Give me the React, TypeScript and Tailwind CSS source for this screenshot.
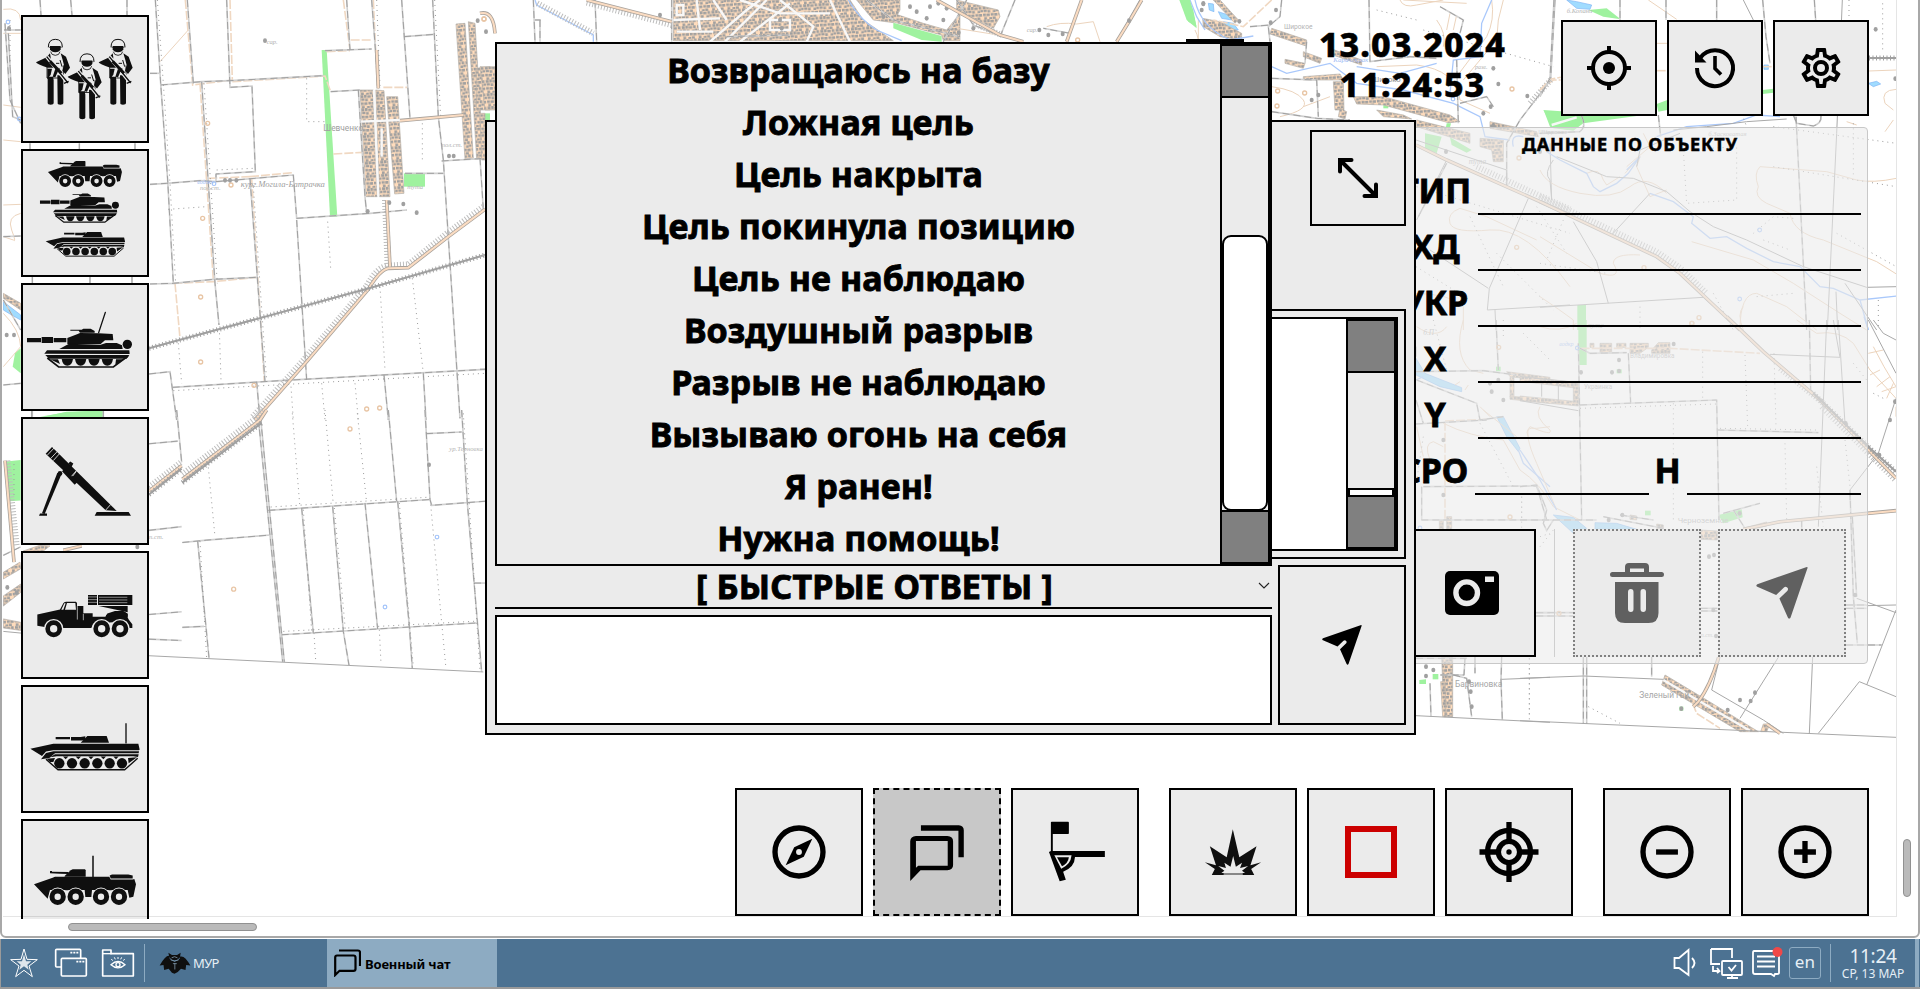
import React from "react";

const PANEL = "#ebebeb";
const INK = "#0f0f0f";

/* ---------- Map ---------- */

type Layer = {
  t: string;
  track?: string[];
  thin?: string[];
  dots?: string[];
  orange?: string[];
  contour?: string[];
  road?: string[];
  ticks?: string[];
  rail?: string[];
  water?: string[];
  lake?: string[];
  green?: string[];
  town?: string[];
  white?: string[];
  rings?: [number, number][];
  blueRings?: [number, number][];
  trees?: [number, number][];
  labels?: [number, number, string, number, boolean, string?][];
};

const layers: Layer[] = [
  {
    t: "scale(.33333)",
    track: [
      "M466 0L482 250L503 540L520 850", "M562 0L580 250", "M605 245L625 550L645 850L657 975",
      "M680 0L690 262L756 258L766 515L648 522V545", "M482 255L605 245L690 242L970 227", "M450 220H480",
      "M450 553L500 550L600 542L648 545L880 525L890 655L1110 640L1220 630", "M890 660L920 1140", "M450 852L520 850L640 838L770 832",
      "M518 1162L840 1142L1455 1108", "M447 1122L510 1115L530 1260", "M1040 0L1050 150", "M975 152L1115 147",
      "M1115 0L1135 265", "M1205 0L1230 355", "M1298 0L1315 350L1330 480L1380 1255", "M1212 110L1303 103",
      "M992 275L1080 270", "M1215 520L1330 520", "M750 535L795 1145", "M1325 483L1455 475", "M1440 475L1450 628",
      "M1152 1125L1165 1260", "M1270 1120L1278 1260", "M770 1145L780 1260", "M1075 270L1095 590L1100 640", "M120 0L123 45", "M212 0L216 45", "M381 0V45",
      "M90 430V447", "M238 430V447", "M405 430V447", "M97 831V850", "M270 831V850", "M396 831V850", "M97 1232V1250",
      "M12 90H62", "M15 70L30 300L62 370", "M25 100L38 350L62 360", "M10 710L62 708", "M10 1155L62 1150", "M10 900L62 990",
    ],
    orange: [
      "M556 0L578 255L697 240", "M600 250L640 840", "M690 0L697 240", "M750 530L880 518", "M625 535L750 530", "M525 850L540 1015", "M520 850L640 845L770 832",
      "M755 535L793 1145", "M697 245L975 228L992 275", "M1030 0L1050 150", "M980 155L1050 152", "M1052 120H1115", "M1150 262H1222", "M1000 462L1090 457", "M1120 0L1132 260",
    ],
    contour: ["M480 185L565 90", "M10 28Q60 20 62 60", "M10 420L62 425", "M10 615L62 613", "M62 640Q20 650 35 690T40 720L10 710", "M10 315L62 322", "M10 940Q60 990 62 1040L10 1100", "M10 100H62", "M1200 362L1390 345"],
    dots: [
      "M920 235V365H975", "M658 985L663 1140", "M983 665L992 805", "M1140 860L1155 1110", "M1237 835L1270 1120", "M505 628L620 620",
      "M535 1030L545 1150", "M873 1160L880 1260", "M965 1150L975 1260", "M1065 1150L1075 1260", "M472 0L490 250L510 550L527 850", "M612 250L652 850",
      "M760 560L800 1145", "M520 1172L1455 1120", "M30 60V200", "M1130 0L1140 260", "M1267 370V480", "M650 510L760 505", "M1304 0L1322 350",
    ],
    road: ["M765 1260L920 1085L1107 865Q1140 810 1165 805L1225 803L1345 710L1455 628", "M1160 600L1170 800", "M1200 362L1390 345", "M1130 150L1135 265"],
    ticks: ["M758 1250L912 1078L1100 858Q1130 800 1165 797L1225 793L1340 700L1455 616", "M1155 600L1163 800"],
    rail: ["M447 1045L1107 865L1455 765"],
    green: ["965,150 980,150 1012,650 990,650", "1212,520 1275,520 1275,560 1212,560", "62,1045 45,1060 38,1100 62,1120", "130,1250 200,1235 310,1232 312,1250", "1455,340 1470,340 1470,362 1455,362", "1105,430 1120,430 1120,445 1105,445"],
    lake: ["10,905 62,945 62,960 35,945 10,930"],
    town: ["1080,270 1120,270 1132,590 1098,590", "1127,270 1152,272 1170,590 1138,590", "1160,290 1193,290 1212,580 1184,582", "1368,72 1395,70 1420,475 1395,477", "1405,65 1425,70 1450,475 1430,478", "1428,205 1470,200 1470,330 1430,330", "10,880 62,910 62,930 10,895"],
    white: ["M1122 270L1135 590", "M1080 365L1200 360", "M1145 385V470"],
    rings: [[623, 370], [608, 655], [602, 891], [602, 1086], [762, 1156], [1100, 1227], [1139, 1224], [693, 555], [1452, 57]],
    blueRings: [[24, 66], [58, 357], [642, 551]],
    trees: [[795, 122], [1250, 638], [1210, 612], [1103, 634], [1347, 468], [1361, 468], [675, 541], [690, 541], [709, 541], [27, 85], [20, 1005], [42, 1005], [1433, 62], [1168, 608]],
    labels: [[970, 392, "Шевченко", 25, false, "#a0a0a0"], [722, 560, "кург.Могила-Батрачка", 26, true, "#a0a0a0"], [800, 132, "сар.", 20, true], [1325, 441, "пол.ст.", 20, true], [600, 569, "пол.ст.", 20, true], [1222, 567, "тута", 20, true], [592, 551, "водокч", 17, true, "#9dbcf5"]],
  },
  {
    t: "translate(0 410) scale(.33333 .33801)",
    track: [
      "M782 25L853 745", "M775 25L848 745", "M530 0L545 155", "M805 297L1290 265", "M1275 0L1290 265L1295 282L1455 270", "M905 290L940 660",
      "M998 285L1030 655L1047 755", "M1095 275L1133 648", "M1193 270L1228 640L1237 765", "M1385 0L1402 275L1445 775", "M1165 0L1190 270",
      "M845 665L1430 630", "M547 392L620 385L810 370", "M593 388L627 733", "M447 605L545 597", "M547 643L612 640", "M447 678L545 682",
      "M447 100L533 92", "M1278 70L1385 65", "M447 356L545 345", "M1422 512H1455", "M95 0V22", "M310 0V22", "M10 430L62 405",
    ],
    thin: ["M447 727L1450 775", "M10 655L63 660"],
    dots: ["M877 10L900 290", "M975 0L1000 280", "M1072 10L1100 275", "M625 170L645 375", "M1292 280L1337 755", "M942 660L947 740", "M1138 650L1143 750", "M600 388L620 733", "M910 295L935 655", "M1003 290L1036 650", "M1198 275L1240 760", "M1390 10L1440 770", "M812 287L1285 258", "M850 655L1425 625", "M42 160V260"],
    road: ["M447 240L545 165", "M547 205L780 30L800 0", "M15 150L42 450", "M190 415L245 402"],
    ticks: ["M447 228L545 153", "M547 190L770 22L790 0", "M22 150L50 400"],
    rail: ["M547 215L785 38", "M447 250L545 174"],
    green: ["18,152 62,148 62,268 28,270", "120,20 190,8 310,0 312,22"],
    town: ["10,480 60,450 62,470 10,500", "10,550 62,515 62,540 10,580", "10,618 62,628 62,652 10,645", "70,417 120,400 150,402 130,417"],
    rings: [[1050, 56], [701, 530]],
    blueRings: [[1311, 376], [1155, 583]],
    trees: [[22, 525], [50, 540], [412, 405], [1287, 162]],
    labels: [[1348, 120, "ур.Терновка", 20, true], [447, 382, "п.ст.", 20, true]],
  },
  {
    t: "translate(480 0) scale(.33333)",
    town: [
      "580,0 1110,0 1150,60 1240,122 580,122", "1130,0 1260,0 1260,30 1240,68 1180,60", "1240,40 1330,70 1400,90 1440,40 1440,122 1390,122 1385,105 1240,66", "0,200 45,200 45,330 15,330", "0,340 15,340 15,480 5,480",
    ],
    white: ["M735 125L860 0", "M780 125L930 10", "M580 60L720 55", "M700 0L740 60", "M690 125L800 30L840 0", "M1050 0L1110 125", "M900 0L1000 80L980 125", "M650 0L660 90", "M590 95H700", "M780 0L900 40L1050 40", "M590 15H610V45H590Z", "M870 60H930V90H870Z"],
    water: ["M165 0L170 15L340 105V125", "M1105 0Q1140 60 1190 90L1265 122"],
    green: ["945,75 985,35 990,50 960,88", "1240,68 1385,108 1385,125 1325,120 1240,85"],
    track: ["M345 0L350 125", "M160 0L165 125", "M180 60V125", "M575 0V125", "M165 60H182", "M1160 0L1240 60L1440 110", "M740 110L930 105", "M0 768L15 764", "M0 1108H15"],
    road: ["M320 0L575 65", "M0 40Q40 30 45 100"],
    ticks: ["M320 8L575 75", "M172 10L340 100"],
    trees: [[540, 45], [900, 60], [905, 85], [1350, 20], [1290, 20], [1310, 35], [1375, 10], [1400, 25], [1340, 55], [1390, 60], [1210, 50], [18, 95]],
    rings: [[12, 57]],
    labels: [],
  },
  {
    t: "translate(690 0) scale(.33333)",
    town: ["800,0 925,30 930,50 910,85 880,70 800,30"],
    road: ["M740 0L930 105L1000 125", "M1175 0L1130 125", "M1355 0L1320 60L1280 125"],
    contour: ["M1070 80Q1110 65 1160 72L1210 65L1230 125", "M800 85L925 105", "M1525 60V125"],
    track: ["M975 0L930 110", "M830 0L760 125", "M800 0L850 75L925 105", "M1350 0L1280 125", "M1130 125L1140 100L1060 85"],
    ticks: ["M850 70L935 105"],
    green: ["1468,0 1498,0 1510,30 1520,85 1490,60"],
    water: ["M1500 0L1520 50L1545 90"],
    trees: [[850, 85], [806, 98], [1048, 90], [1075, 105], [1118, 102], [1317, 62], [1540, 10]],
    rings: [[1163, 120]],
    labels: [[1010, 95, "сар.", 20, true]],
  },
  {
    t: "translate(1170 0) scale(.33333)",
    lake: ["115,10 130,12 132,35 118,30", "145,35 175,45 185,60 155,55", "160,65 190,70 205,90 175,88"],
    town: [
      "98,55 150,65 215,100 215,120 150,110 100,80", "130,0 150,0 205,60 195,70", "305,85 410,120 408,138 300,102", "400,155 455,175 450,190 400,170", "480,145 575,180 575,195 480,162",
      "345,178 405,190 400,205 345,190", "400,230 510,222 520,240 400,240", "490,245 520,245 522,330 495,330", "510,325 530,335 525,357 505,350",
      "550,290 640,290 840,345 870,365 835,368 640,315 560,312", "740,360 900,400 900,430 740,380", "930,415 1000,420 1000,485 970,485 965,450 930,440", "620,330 700,345 725,357 640,350", "960,365 1100,395 1105,410 960,385",
    ],
    water: ["M75 0Q90 80 180 120L250 108", "M305 200L350 220L480 190L560 250L700 270L850 310L930 350L945 410L1020 420", "M965 0L935 70L930 170L850 180L840 280", "M800 190L690 220L560 200", "M1030 440Q1020 400 1060 410"],
    track: ["M597 0L600 185L720 170L800 175", "M1155 0L1142 240L1050 360L1010 430V560", "M305 235L440 240L445 350", "M305 335L440 355L540 360", "M335 0L330 50L295 80L300 125", "M410 125L405 190", "M240 80L300 75", "M860 180L865 370", "M870 310L950 290L970 320", "M810 20L880 60L870 100", "M830 490L745 650"],
    thin: ["M830 480L740 660", "M1075 595L958 865L952 930L1200 915", "M780 750L955 865", "M975 930L978 990", "M738 420L1010 510V560", "M1140 430L1145 600"],
    orange: ["M305 0L220 80L130 60", "M1110 270L1150 240H1172"],
    contour: ["M690 0Q700 25 740 15L820 0", "M965 0Q975 60 950 110L860 230", "M1000 0L985 60L980 120L880 240", "M305 260Q380 270 400 300T330 350", "M800 60Q830 100 820 140", "M840 40L830 90", "M700 0L890 10", "M860 45L850 90", "M400 320L480 290", "M620 200L740 195Q860 210 870 300L960 340", "M870 625Q830 640 840 670T960 690T1200 860", "M870 625L950 650L1100 720", "M730 880Q840 880 880 920V990", "M75 90Q90 120 80 130"],
    dots: ["M740 560L1200 700", "M900 650L1000 860", "M738 800L900 900", "M980 760L1150 930", "M760 90L1150 200", "M620 30L740 60", "M1100 620L1190 760"],
    road: ["M738 435L830 480L1200 645"],
    ticks: ["M920 500L1200 628", "M1142 240L1080 310"],
    green: ["765,400 815,410 800,460 765,445", "840,412 905,450 890,458 845,435", "1120,330 1195,335 1195,390 1150,385", "30,0 60,0 80,80 55,65", "640,313 655,313 655,325 640,325", "830,370 843,370 840,382 828,382"],
    rings: [[323, 273], [404, 279], [321, 318], [1047, 474], [1040, 742], [1026, 267]],
    blueRings: [[849, 297]],
    trees: [[95, 30], [100, 12], [302, 68], [318, 30], [208, 64], [985, 252], [962, 320], [1072, 288], [970, 205], [425, 300], [828, 455], [445, 285], [970, 378], [940, 340]],
    labels: [[342, 88, "Широкое", 20, false], [606, 247, "Широко", 23, false, "#8f8f8f"], [490, 185, "Карачекрак", 21, true, "#9dbcf5"], [896, 492, "тута", 22, true, "#b0b0b0"], [915, 206, "разв.", 18, true], [1105, 403, "Широкое", 18, false]],
  },
  {
    t: "translate(1540 0) scale(.33333)",
    track: ["M42 0L30 235L0 290", "M240 0V60", "M378 0V60", "M530 0V60", "M668 0L678 110L690 190", "M823 0L827 60", "M768 350L800 990", "M760 345L770 370L820 378Q845 370 843 348", "M125 348Q140 380 120 395L0 400", "M355 345L362 410"],
    thin: ["M610 0L640 60", "M907 0L890 400L862 990", "M50 470L200 530L280 535L380 575L450 635L520 680L620 720L790 800L980 862L1069 860", "M205 910L170 785L100 665", "M330 580L215 705", "M0 922L490 892L600 990", "M888 875L893 990", "M915 850L1010 990", "M400 390L500 380L620 365L740 357", "M40 480Q10 520 30 540L35 600", "M420 400L300 450L290 500"],
    orange: ["M350 212H382", "M0 270L30 238L62 232", "M668 200H700"],
    contour: ["M1069 535Q1000 550 950 540L860 515L660 500Q640 520 655 560Q640 590 680 610L750 640Q760 700 850 720L1010 785L1069 822", "M325 0L410 58", "M987 213L1069 210", "M1069 268Q1020 270 1035 310L1060 330", "M0 510Q20 560 120 580T270 560T380 580", "M0 710L180 820Q250 840 220 790Q220 760 300 765", "M1060 360L1035 395", "M920 365L950 375", "M455 725L640 780L760 850L900 940L980 990", "M600 990Q600 880 650 880L740 920L830 990", "M610 990Q590 940 610 920", "M140 520Q180 500 190 540L200 555L240 530", "M255 520L300 470L290 500L330 590L380 570", "M350 130H382", "M0 890Q60 930 100 960V990", "M310 400L330 440L260 500"],
    dots: ["M927 0V150", "M1028 10V160", "M430 450L440 610L590 600V440Z", "M700 380L1069 430", "M940 370V530", "M640 700L700 650L760 655", "M700 500L1069 560", "M670 720L750 750", "M1015 900V990", "M890 700L1069 800", "M590 300L620 380", "M0 790L200 820", "M300 920V990", "M520 880L580 990", "M70 660L20 780", "M650 890L760 880"],
    road: ["M0 605L350 770L420 820L600 990"],
    ticks: ["M0 590L350 755L420 803L500 880"],
    rail: ["M987 174H1069"],
    green: ["12,333 160,345 290,348 130,370 100,392 30,380", "145,30 200,25 242,58 190,50", "350,312 382,300 382,330 355,335", "668,270 700,266 700,278 668,282", "112,915 138,915 138,990 112,990"],
    lake: ["80,0 110,5 155,15 150,28 110,25", "672,195 685,195 685,208 672,208", "985,250 1010,244 1022,252 1000,260"],
    water: ["M20 455L60 480L140 520L160 560L180 575L230 550L265 520L300 470L260 510", "M330 580L400 605L460 650L455 670L510 715L560 710L620 745L700 785L780 800L840 860L880 865L960 900L1069 888", "M350 410L440 380L580 370L650 345L720 350", "M960 900L985 990"],
    white: ["M35 375L110 352"],
    rings: [[312, 803], [456, 970], [477, 953]],
    blueRings: [[659, 690], [599, 897]],
    trees: [[1007, 88], [1066, 236], [0, 455]],
    labels: [[80, 38, "б.Копани", 20, true], [505, 408, "б.Засковатая", 20, true], [5, 402, "Широкое", 18, false], [140, 985, "тута", 20, true, "#b0b0b0"]],
  },
  {
    t: "translate(1170 320) scale(.33333)",
    lake: ["738,115 765,160 875,203 875,215 810,200 738,165", "980,290 1000,290 1050,385 1045,395 1010,350"],
    water: ["M1045 390L1060 430L1140 500", "M738 180L760 170"],
    town: ["1010,155 1140,172 1140,185 1020,170", "1020,228 1140,240 1140,250 1020,238", "1020,172 1032,172 1032,230 1020,230", "815,1012 848,1012 848,1190 822,1190", "812,1085 825,1085 828,1190 818,1190", "808,600 820,600 820,628 808,628", "830,590 845,590 845,628 830,628"],
    track: ["M738 155L940 152L1040 165", "M740 180L920 250L930 300L1000 290", "M738 312L950 300", "M755 500V600H1120", "M760 500L1100 498L1130 600", "M978 0L985 150", "M738 1015H890", "M885 1015L882 1065H810", "M915 1010V1060", "M995 1010L993 1080L997 1200", "M850 1065L890 1075L905 1190", "M780 1090L783 1190", "M738 240L760 310", "M1098 878H1140", "M1098 888H1140"],
    thin: ["M738 1187L1140 1207", "M738 80V110", "M995 1078L1140 1072"],
    orange: ["M825 305V600", "M825 303L950 298"],
    contour: ["M880 0Q850 100 900 150L940 160", "M940 270L1040 350", "M820 310Q900 350 1000 360L1050 450", "M1075 350Q1060 320 1100 325L1140 320", "M780 420Q760 370 790 365L820 380", "M930 260L960 290", "M740 320L760 410", "M855 195L870 185M885 210L895 195", "M740 20Q800 60 830 20"],
    dots: ["M790 0L830 150", "M1055 530V628", "M1078 1015V1190", "M1000 0V60", "M930 310L1030 500", "M1110 650L1140 640", "M1060 40L1140 120", "M760 350L740 480"],
    green: ["788,1062 805,1062 805,1078 788,1078", "748,1080 768,1078 768,1092 748,1092", "978,140 992,140 992,154 978,154"],
    rings: [[986, 82], [1020, 591]],
    blueRings: [[750, 624]],
    trees: [[960, 190], [1000, 240], [985, 180], [768, 1040], [768, 1068], [790, 1050], [897, 1085], [905, 1160], [820, 360], [820, 525], [902, 1115], [965, 215]],
    labels: [[855, 1100, "Барвиновка", 25, false, "#a6a6a6"], [760, 45, "б.П", 22, true, "#b0b0b0"]],
  },
  {
    t: "translate(1520 320) scale(.33333)",
    green: ["175,0 200,0 200,135 175,135", "595,585 665,568 668,592 610,610", "375,572 392,572 392,586 375,586", "290,148 305,148 305,160 290,160", "478,1160 490,1160 490,1172 478,1172"],
    lake: ["100,585 160,592 200,625 160,640", "225,608 290,610 350,628 225,628"],
    town: [
      "0,168 175,188 175,205 0,184", "0,228 175,245 175,258 0,242", "160,188 178,190 178,250 160,248", "210,70 222,70 222,82 210,82", "240,70 275,70 275,100 240,100", "290,70 318,70 318,82 290,82",
      "330,70 385,70 385,82 360,100 330,100", "395,90 415,68 450,68 450,100 395,100", "543,630 592,633 592,660 543,658", "435,1065 560,1140 715,1235 660,1235 425,1095", "730,1212 750,1212 740,1235 722,1235", "330,585 350,588 350,600 330,598", "410,612 430,615 430,625 410,625", "680,622 740,606 740,618 690,628",
    ],
    white: ["M430 1080L690 1232"],
    water: ["M0 390L60 480L110 570", "M1032 -10L1045 30"],
    track: ["M180 255L590 240L597 600", "M175 70L185 600", "M325 100L332 248", "M180 85L210 100L320 98", "M868 0L872 210L975 315", "M592 330L895 338", "M0 600L230 600", "M250 590L430 625", "M300 585L400 600", "M610 580L720 550", "M640 570L675 625", "M845 600V628", "M190 1010V1212", "M200 1010V1212", "M395 1010V1070", "M49 878H160", "M49 888H160", "M542 865H592", "M542 873H592", "M978 855H1040", "M978 865H1040", "M990 510L1000 830L1012 970", "M997 590L1010 830", "M978 975H1085", "M0 500L50 495L80 570L70 610L80 632L100 600"],
    thin: ["M0 1202L1128 1252", "M920 0L895 620", "M955 0L975 310L1050 380", "M750 103L960 112L940 0", "M878 1010L868 1240", "M895 1240L1018 1085L1128 1130", "M1128 870L1040 1095", "M1040 857L1128 855", "M1010 835L1128 878", "M0 1075L190 1068L430 1078", "M775 1012L660 1195", "M600 1010L575 1110L730 1200L790 1240", "M1128 235L1075 400L990 510V540", "M1045 0L1128 160", "M1060 0L1090 40L1128 60", "M0 170L175 188", "M0 242L175 272", "M65 190V230M115 195V240"],
    orange: ["M182 85L450 85L720 100", "M518 1150L530 1180L600 1225"],
    contour: ["M60 260Q40 290 90 330Q100 350 30 320Q10 340 50 430L110 570", "M830 0L890 40Q960 30 1000 70L1050 150L1128 235", "M1045 100L1090 90M1050 165L1080 150M1070 200L1110 170M1085 215L1128 200M1100 235L1120 190", "M0 450Q60 490 100 560L180 600", "M1060 80Q1090 140 1128 200", "M60 20Q120 40 170 10", "M1128 260V290"],
    road: ["M620 -10L730 95L900 240L1128 475", "M670 628L780 605L1128 572", "M596 1012Q570 1100 535 1145L520 1160", "M740 1212L780 1240"],
    ticks: ["M780 145L910 250", "M905 260L1128 482"],
    rail: ["M880 220L1050 385L1128 455"],
    dots: ["M548 95V240", "M675 105L683 320", "M762 100L768 320", "M795 370L800 600", "M460 250V600", "M890 440L910 620", "M975 360L990 500", "M180 265L590 252", "M600 325L890 330", "M1000 130L1040 180", "M28 1015V1200", "M205 1160L300 1210", "M700 860L760 900", "M60 680L100 630", "M1060 220L1100 240", "M5 530V600"],
    blueRings: [[172, 84]],
    rings: [[117, 880], [515, 10]],
    trees: [[183, 157], [276, 157], [297, 120], [297, 153], [461, 72], [266, 600], [307, 585], [659, 580], [582, 705], [567, 710], [660, 1140], [1078, 405], [1125, 245], [623, 1170], [484, 1166], [1110, 300], [977, 310], [580, 870], [588, 948], [705, 1118], [692, 1143], [1005, 825]],
    labels: [[330, 115, "Владимировка", 19, false], [192, 206, "Украинка", 19, false], [473, 608, "Черноземное", 24, false], [358, 1133, "Зеленый Гай", 25, false, "#a6a6a6"], [118, 78, "водкр", 18, true, "#9dbcf5"], [204, 22, "тута", 20, true, "#b0b0b0"], [542, 950, "п.ст.", 18, true]],
  },
];

function P({ d, c, w, dash }: { d: string[] | undefined; c: string; w: number; dash?: string }) {
  return (
    <>
      {(d || []).map((p, i) => (
        <path key={i} d={p} fill="none" stroke={c} strokeWidth={w} strokeDasharray={dash} vectorEffect="non-scaling-stroke" />
      ))}
    </>
  );
}

function MapCanvas() {
  return (
    <svg className="absolute left-[3px] top-0" width="1893" height="916" viewBox="3 0 1893 916">
      <defs>
        <pattern id="houses" width="46" height="40" patternUnits="userSpaceOnUse" patternTransform="rotate(-4)">
          <rect width="46" height="40" fill="#ffdcbc" />
          <path
            d="M0 1H9V9H0ZM11 0H19V9H11ZM21 2H31V10H21ZM34 1H42V9H34ZM2 11H12V18H2ZM14 12H22V20H14ZM30 13H38V20H30ZM39 11H46V18H39ZM0 22H8V30H0ZM10 23H20V31H10ZM23 22H31V30H23ZM33 23H43V31H33ZM3 33H11V40H3ZM18 34H26V40H18ZM28 33H37V40H28Z"
            fill="#a0a0a0"
          />
        </pattern>
      </defs>
      {layers.map((l, i) => (
        <g key={i} transform={l.t}>
          {(l.green || []).map((p, k) => <polygon key={k} points={p} fill="#9ff29f" />)}
          {(l.lake || []).map((p, k) => <polygon key={k} points={p} fill="#a0dcff" stroke="#7fb4f5" strokeWidth="2" />)}
          {(l.town || []).map((p, k) => <polygon key={k} points={p} fill="url(#houses)" stroke="#b8b0a8" strokeWidth="2" />)}
          <P d={l.white} c="#f8f8f8" w={2.4} />
          <P d={l.contour} c="#ecd4bd" w={1} />
          <P d={l.orange} c="#f0d8c2" w={1.6} dash="9 2" />
          <P d={l.water} c="#a9c8fb" w={1.3} />
          <P d={l.track} c="#d0d0d0" w={1.6} />
          <P d={l.track} c="#a0a0a0" w={1} dash="7 4" />
          <P d={l.thin} c="#a8a8a8" w={1} />
          <P d={l.dots} c="#9a9a9a" w={1} dash="1 4" />
          <P d={l.ticks} c="#bdbdbd" w={6} dash="1 2" />
          <P d={l.road} c="#a8a29c" w={3.6} />
          <P d={l.road} c="#fbdcc2" w={2} />
          <P d={l.rail} c="#a0a0a0" w={2} />
          <P d={l.rail} c="#a0a0a0" w={5} dash="1 2.500" />
          {(l.rings || []).map(([x, y], k) => <circle key={k} cx={x} cy={y} r="6" fill="none" stroke="#e8c5a5" strokeWidth="4" />)}
          {(l.blueRings || []).map(([x, y], k) => <circle key={k} cx={x} cy={y} r="5.5" fill="none" stroke="#a3c4fa" strokeWidth="3.5" />)}
          {(l.trees || []).map(([x, y], k) => <ellipse key={k} cx={x} cy={y} rx="6" ry="7" fill="#a0a0a0" />)}
          {(l.labels || []).map(([x, y, s, size, it, c], k) => (
            <text key={k} x={x} y={y} fontSize={size} fill={c || "#b4b4b4"} className={it ? "font-['Liberation_Serif'] italic" : "font-['Roboto']"}>
              {s}
            </text>
          ))}
        </g>
      ))}
    </svg>
  );
}

/* ---------- Vehicle drawings ---------- */

function Soldier() {
  return (
    <g fill={INK}>
      <path d="M145 142Q145 118 166 118T187 142" fill="none" stroke={INK} strokeWidth="3" />
      <path d="M147 142H185" stroke={INK} strokeWidth="2" />
      <path d="M150 138H182V148Q178 157 166 157T150 148Z" />
      <path d="M152 155Q154 166 166 166T180 155" fill="none" stroke={INK} strokeWidth="2.5" />
      <path d="M150 160L140 172L108 187Q110 193 143 203L160 203L176 214L180 206L150 190L152 172Z" />
      <path d="M182 160L198 170L210 203L196 222L187 212L192 196L188 180Z" />
      <path d="M141 172V234H190V196" fill="none" stroke={INK} strokeWidth="2.5" />
      <path d="M142 206H156L152 224L142 238Z" />
      <path d="M143 230H160V236L161 240V310Q161 314 152 314T143 310Z" />
      <path d="M172 226H190V310Q190 314 181 314T173 310Z" />
      <path d="M140 170L204 249" stroke={PANEL} strokeWidth="11" />
      <path d="M140 170L204 249M192 250L206 244" stroke={INK} strokeWidth="4" />
      <path d="M150 184L184 220" stroke={INK} strokeWidth="9" />
      <path d="M166 206L158 230L166 232L174 214Z" />
      <path d="M180 180L186 200M168 190H178" stroke={INK} strokeWidth="3" />
    </g>
  );
}

function Tank() {
  return (
    <g fill={INK}>
      <path d="M81 1014H123V1027H81ZM125 1011H159V1029H125ZM161 1014H199V1027H161Z" />
      <path d="M202 1014L233 1002L240 999L296 1000L338 1002L340 1021H315L302 1032H202Z" />
      <path d="M211 989H245L250 986H272L284 993V998H240L236 992H211Z" />
      <path d="M178 1047L207 1031L302 1034L318 1029H350L366 1036L368 1047Z" />
      <circle cx="382" cy="1033" r="14" />
      <path d="M133 1061L141 1051H388L389 1062Z" />
      <path d="M136 1065H388L380 1076H147Z" />
      <path d="M142 1074L176 1101H340L384 1068" fill="none" stroke={INK} strokeWidth="5" />
      {[202, 242, 282, 322].map((x) => <path key={x} d={`M${x - 17} 1077H${x + 17}Q${x + 14} 1097 ${x} 1097T${x - 17} 1077Z`} />)}
      <path d="M150 1078H174L180 1092ZM348 1078H374L346 1094Z" />
    </g>
  );
}

function Bmp() {
  return (
    <g fill={INK}>
      <path d="M167 968H210V975H167ZM213 968H242L256 966V978H213Z" />
      <path d="M242 985L262 965H320L327 985Z" />
      <path d="M91 1003L160 988H415L419 1005L417 1007H160L138 1011L126 1024Z" />
      <path d="M123 1034L138 1015L160 1010H417L416 1016H165L148 1030Z" />
      <path d="M150 1028L165 1019H416L414 1027L400 1025H170Z" />
      <path d="M138 1034L174 1065H374L413 1031" fill="none" stroke={INK} strokeWidth="4" />
      {[178, 216, 254, 292, 329, 366].map((x) => <circle key={x} cx={x} cy="1046" r="15.5" />)}
      <path d="M140 1032L165 1030L160 1042L150 1042ZM384 1030L411 1028L386 1046Z" />
      {[197, 235, 273, 310, 348].map((x) => <path key={x} d={`M${x - 8} 1026H${x + 8}L${x} 1034Z`} />)}
    </g>
  );
}

function Btr() {
  return (
    <g fill={INK}>
      <path d="M150 1364H156V1366L205 1367V1373L180 1372L150 1371Z" />
      <path d="M194 1379L212 1362L218 1359H255L257 1362V1381H194Z" />
      <path d="M102 1403L158 1384L165 1381H328L332 1389H398L403 1388L408 1403L400 1440L388 1443L383 1420H276L274 1441H256L254 1420H150L143 1446Z" />
      <path d="M329 1377L336 1374H385L398 1377V1386H332Z" />
      {[173, 227, 303, 357].map((x) => (
        <g key={x}>
          <circle cx={x} cy="1440" r="27" fill={PANEL} />
          <circle cx={x} cy="1440" r="17" fill="none" stroke={INK} strokeWidth="15" />
        </g>
      ))}
      <path d="M192 1411H208L205 1421H196ZM322 1411H338L335 1421H326Z" />
    </g>
  );
}

function Tile({ box, children }: { box: string; children: React.ReactNode }) {
  return (
    <button className="size-32 shrink-0 border-2 border-black bg-[#ebebeb]">
      <svg className="block size-[124px]" viewBox={box} preserveAspectRatio="none">{children}</svg>
    </button>
  );
}

function UnitBar() {
  return (
    <aside className="flex h-[919px] w-[149px] shrink-0 flex-col gap-1.5 overflow-hidden pl-[21px] pt-[15px]">
      <Tile box="69 51 372 372">
        <Soldier />
        <g transform="translate(188 0)"><Soldier /></g>
        <g transform="translate(95 43.5)"><Soldier /></g>
      </Tile>
      <Tile box="69 453 372 372">
        <g transform="translate(70 -522.5) scale(.725 .74)"><Btr /></g>
        <g transform="translate(59 -157) scale(.752 .748)"><Tank /></g>
        <g transform="translate(71 -.5) scale(.726 .722)"><Bmp /></g>
      </Tile>
      <Tile box="69 855 372 372">
        <Tank />
        <path d="M296 998L316 937" stroke={INK} strokeWidth="4" strokeLinecap="round" />
      </Tile>
      <Tile box="69 27 372 367">
        <g fill={INK}>
          <path d="M156 110L137 130L317 297L350 299Z" />
          <path d="M163 112L142 134M173 122L152 144M180 128L160 150M236 172L206 206M229 182L218 196M332 280L314 300" stroke={PANEL} strokeWidth="2.5" />
          <path d="M190 178L228 218" stroke={INK} strokeWidth="11" />
          <path d="M172 186L184 191L134 308L126 306Z" />
          <circle cx="180" cy="188" r="7" />
          <path d="M205 158L211 153L220 159L214 170Z" />
          <path d="M120 307H141V313H117ZM290 302H386L393 313H284Z" />
        </g>
      </Tile>
      <Tile box="69 423 372 367">
        <g fill={INK}>
          <path d="M112 605L180 590L190 572Q192 567 198 567H228L231 571V580H250V601H278V612H316L322 602L345 595H370L383 602V614L386 620L397 634V645H388L378 624L340 628L280 632L274 645H190L160 622L134 642L112 638Z" />
          <path d="M184 591L193 572H197L190 591ZM195 591L201 571H226L228 591Z" fill={PANEL} />
          <path d="M232 580V620M250 603V622" stroke={PANEL} strokeWidth="2" />
          <path d="M264 547H291V577H264ZM294 547H397V577H294ZM296 580H383V598L345 590Z" />
          <path d="M264 553H291M264 561H291M264 569H291M297 554H382M297 562H382M297 570H382" stroke="#c4c4c4" strokeWidth="2" />
          <path d="M318 607L345 597H372L383 604V612H318Z" />
          {[161, 305, 360].map((x) => (
            <g key={x}>
              <circle cx={x} cy="647" r="29" fill={PANEL} />
              <circle cx={x} cy="647" r="18" fill="none" stroke={INK} strokeWidth="14" />
            </g>
          ))}
        </g>
      </Tile>
      <Tile box="69 820 372 367">
        <Bmp />
        <path d="M378 927V987" stroke="#3c3c3c" strokeWidth="5" />
      </Tile>
      <Tile box="69 1216 372 367">
        <Btr />
        <path d="M279 1319V1382" stroke={INK} strokeWidth="4.5" />
      </Tile>
    </aside>
  );
}

/* ---------- Toolbars ---------- */

function TopButton({ children }: { children: React.ReactNode }) {
  return (
    <button className="flex size-24 items-center justify-center border-2 border-black bg-[#ebebeb]">
      <svg width="48" height="48" viewBox="0 0 48 48">{children}</svg>
    </button>
  );
}

const COG =
  "M12,8A4,4 0 0,1 16,12A4,4 0 0,1 12,16A4,4 0 0,1 8,12A4,4 0 0,1 12,8M12,10A2,2 0 0,0 10,12A2,2 0 0,0 12,14A2,2 0 0,0 14,12A2,2 0 0,0 12,10M10,22C9.75,22 9.54,21.82 9.5,21.58L9.13,18.93C8.5,18.68 7.96,18.34 7.44,17.94L4.95,18.95C4.73,19.03 4.46,18.95 4.34,18.73L2.34,15.27C2.21,15.05 2.27,14.78 2.46,14.63L4.57,12.97L4.5,12L4.57,11L2.46,9.37C2.27,9.22 2.21,8.95 2.34,8.73L4.34,5.27C4.46,5.05 4.73,4.96 4.95,5.05L7.44,6.05C7.96,5.66 8.5,5.32 9.13,5.07L9.5,2.42C9.54,2.18 9.75,2 10,2H14C14.25,2 14.46,2.18 14.5,2.42L14.87,5.07C15.5,5.32 16.04,5.66 16.56,6.05L19.05,5.05C19.27,4.96 19.54,5.05 19.66,5.27L21.66,8.73C21.79,8.95 21.73,9.22 21.54,9.37L19.43,11L19.5,12L19.43,13L21.54,14.63C21.73,14.78 21.79,15.05 21.66,15.27L19.66,18.73C19.54,18.95 19.27,19.04 19.05,18.95L16.56,17.95C16.04,18.34 15.5,18.68 14.87,18.93L14.5,21.58C14.46,21.82 14.25,22 14,22H10M11.25,4L10.88,6.61C9.68,6.86 8.62,7.5 7.85,8.39L5.44,7.35L4.69,8.65L6.8,10.2C6.4,11.37 6.4,12.64 6.8,13.8L4.68,15.36L5.43,16.66L7.86,15.62C8.63,16.5 9.68,17.14 10.87,17.38L11.24,20H12.76L13.13,17.39C14.32,17.14 15.37,16.5 16.14,15.62L18.57,16.66L19.32,15.36L17.2,13.81C17.6,12.64 17.6,11.37 17.2,10.2L19.31,8.65L18.56,7.35L16.15,8.39C15.38,7.5 14.32,6.86 13.12,6.62L12.75,4H11.25Z";

function TopBar() {
  return (
    <div className="flex items-start pt-5">
      <div className="mr-[55px] pt-1 text-center text-[34px] leading-10 font-extrabold tracking-[1.05px] [-webkit-text-stroke:0.5px_#000]">
        <div className="whitespace-nowrap">13.03.2024</div>
        <div className="whitespace-nowrap">11:24:53</div>
      </div>
      <div className="flex gap-2.5">
        <TopButton>
          <circle cx="24" cy="24" r="6" />
          <circle cx="24" cy="24" r="16" fill="none" stroke="#000" strokeWidth="4" />
          <path d="M24 2V8M24 40V46M2 24H8M40 24H46" stroke="#000" strokeWidth="4" />
        </TopButton>
        <TopButton>
          <path d="M6 24A18 18 0 1 0 9.5 13.5" fill="none" stroke="#000" strokeWidth="4" />
          <path d="M4 6.5V18.5H15.5Z" />
          <path d="M24 12V24.5L30 30.5" fill="none" stroke="#000" strokeWidth="3.6" />
        </TopButton>
        <TopButton>
          <path d={COG} transform="scale(2)" />
        </TopButton>
      </div>
    </div>
  );
}

const PLANE = "M39.5 1.2Q40.2-.3 38.5.2L1 13.3Q-.5 14.5 1 15.2L15.5 21.6L21.5 15.7Q22.8 14.6 24 15.7T24.2 18.3L18 24.3L24.5 38.8Q25.6 40.6 26.6 38.8Z";

function BigButton({ children, dashed }: { children: React.ReactNode; dashed?: boolean }) {
  return (
    <button className={dashed ? "flex size-32 items-center justify-center border-2 border-dashed border-black bg-[#c8c8c8]" : "flex size-32 items-center justify-center border-2 border-black bg-[#ebebeb]"}>
      {children}
    </button>
  );
}

function BottomBar() {
  return (
    <div className="mt-[124px] flex gap-[30px]">
      <div className="flex gap-2.5">
        <BigButton>
          <svg width="64" height="64" viewBox="0 0 24 24">
            <circle cx="12" cy="12" r="9" fill="none" stroke="#000" strokeWidth="2" />
            <path d="M7 17L10.2 10.2L17 7L13.8 13.8Z" />
            <circle cx="12" cy="12" r="1.1" fill={PANEL} />
          </svg>
        </BigButton>
        <BigButton dashed>
          <svg width="124" height="124" viewBox="405 60 324 372" preserveAspectRatio="none">
            <path d="M525 166H624Q637 167 637 181V262H623V182H525Z" />
            <path fillRule="evenodd" d="M512 198H594Q609 199 609 214V286Q609 300 594 301H524L497 333V214Q498 199 512 198ZM512 213V293L518 287H595V213Z" />
          </svg>
        </BigButton>
        <BigButton>
          <svg width="124" height="124" viewBox="766 60 324 372" preserveAspectRatio="none">
            <path d="M865 157Q865 155 867 155H910Q912 155 912 158V190Q912 192 910 192H870V243H1006V261H928Q927 292 897 305L904 329L888 334L860 246L865 243Z" />
            <path d="M874 256H919Q917 284 892 296Z" fill={PANEL} />
            <path d="M881 262H912Q910 280 894 289Z" />
          </svg>
        </BigButton>
      </div>
      <div className="flex gap-2.5">
        <BigButton>
          <svg width="124" height="124" viewBox="1178.5 60 324 372" preserveAspectRatio="none">
            <path fill={INK} d="M1340 178L1357 262L1402 229L1386 286L1414 277L1388 297L1396 315H1285L1293 297L1267 277L1296 286L1280 229L1324 262Z" />
            <path fill={PANEL} d="M1341 258L1348 290L1364 278L1359 294L1380 288L1364 302L1372 309H1310L1318 302L1302 288L1322 294L1318 278L1334 290Z" />
            <path d="M1316 312H1366" stroke="#a0a0a0" strokeWidth="5" />
          </svg>
        </BigButton>
        <BigButton>
          <svg width="52" height="52" viewBox="0 0 52 52"><rect x="3" y="3" width="46" height="46" fill="none" stroke="#cc0000" strokeWidth="6" /></svg>
        </BigButton>
        <BigButton>
          <svg width="60" height="60" viewBox="0 0 60 60">
            <g fill="none" stroke="#000" strokeWidth="5.3">
              <circle cx="30" cy="30" r="21.5" />
              <circle cx="30" cy="30" r="10.6" />
              <path d="M30 0V20M30 40V60M.5 30H20M40 30H59.5" />
            </g>
            <circle cx="30" cy="30" r="2.7" />
          </svg>
        </BigButton>
      </div>
      <div className="flex gap-2.5">
        {["M7.9 12H16.1", "M7.9 12H16.1M12 7.9V16.1"].map((d) => (
          <BigButton key={d}>
            <svg width="64" height="64" viewBox="0 0 24 24" fill="none" stroke="#000" strokeWidth="2">
              <circle cx="12" cy="12" r="9" />
              <path d={d} />
            </svg>
          </BigButton>
        ))}
      </div>
    </div>
  );
}

/* ---------- Object data panel ---------- */

function FieldLabel({ wide, children }: { wide: string; children: React.ReactNode }) {
  return (
    <label className={`${wide} pr-px pb-[3px] text-center text-[34px] leading-[44px] font-bold tracking-[-0.3px] [-webkit-text-stroke:0.8px_#000]`}>
      {children}
    </label>
  );
}

function DataPanel() {
  return (
    <section className="mr-px mt-[11px] flex h-[537px] w-[476px] flex-col rounded border border-[#c8c8c8] bg-[#ebebeb]/60 pr-1.5">
      <h2 className="h-[31px] pt-[3px] pl-1.5 text-center text-[18px] leading-[26px] font-bold tracking-[0.85px] [-webkit-text-stroke:0.5px_#000]">ДАННЫЕ ПО ОБЪЕКТУ</h2>
      {["ТИП", "ХД", "УКР", "X", "Y"].map((l) => (
        <div key={l} className="flex h-14 items-end">
          <FieldLabel wide="w-[85px]">{l}</FieldLabel>
          <div className="h-14 flex-1 border-b-2 border-black" />
        </div>
      ))}
      <div className="flex h-14 items-end">
        <FieldLabel wide="w-[82px]">СРО</FieldLabel>
        <div className="h-14 w-[174px] border-b-2 border-black" />
        <FieldLabel wide="w-[38px]">Н</FieldLabel>
        <div className="h-14 flex-1 border-b-2 border-black" />
      </div>
      <div className="mt-[34px] flex pl-[15px]">
        <button className="flex size-32 items-center justify-center border-2 border-black bg-[#ebebeb]">
          <svg width="54" height="44" viewBox="0 0 54 44">
            <rect width="54" height="44" rx="5" />
            <circle cx="21.7" cy="21.7" r="10.8" fill="none" stroke={PANEL} strokeWidth="5.4" />
            <rect x="40" y="5.5" width="9" height="5.5" fill={PANEL} />
          </svg>
        </button>
        <div className="ml-[18px] mr-[18px] h-32 w-px bg-[#cfcfcf]" />
        <button className="flex size-32 justify-center border-2 border-dotted border-[#808080] bg-[#ebebeb] pt-8">
          <svg width="54" height="60" viewBox="0 0 54 60" fill="#606060">
            <path fillRule="evenodd" d="M19 0H35Q39 0 39 4V9H51.500Q54 9 54 11.500T51.500 14H2.500Q0 14 0 11.500T2.500 9H15V4Q15 0 19 0ZM20 5.500V9H34V5.500Z" />
            <path fillRule="evenodd" d="M5 19H48.500V50Q48.500 60 38.500 60H15Q5 60 5 50ZM18 29V46Q18 49 20.800 49T23.500 46V29Q23.500 26 20.800 26T18 29ZM30.500 29V46Q30.500 49 33.200 49T36 46V29Q36 26 33.200 26T30.500 29Z" />
          </svg>
        </button>
        <button className="ml-[17px] flex size-32 items-center justify-center border-2 border-dotted border-[#808080] bg-[#ebebeb]">
          <svg width="52" height="52" viewBox="0 0 40 40" fill="#606060"><path d={PLANE} /></svg>
        </button>
      </div>
    </section>
  );
}

/* ---------- Chat window ---------- */

const replies = [
  "Возвращаюсь на базу", "Ложная цель", "Цель накрыта", "Цель покинула позицию", "Цель не наблюдаю",
  "Воздушный разрыв", "Разрыв не наблюдаю", "Вызываю огонь на себя", "Я ранен!", "Нужна помощь!",
];

function ReplyList() {
  return (
    <div className="absolute -top-[80px] left-2 z-10 flex h-[524px] w-[777px] border-2 border-r-0 border-black bg-[#ebebeb]">
      <ul className="w-[723px]">
        {replies.map((r) => (
          <li key={r} className="h-[52px] text-center text-[34px] leading-[52px] font-bold tracking-[0.08px] whitespace-nowrap [-webkit-text-stroke:0.9px_#000]">{r}</li>
        ))}
      </ul>
      <div className="flex w-[52px] flex-col border-y-2 border-r-4 border-l-2 border-black">
        <div className="h-[52px] border-b-2 border-black bg-[#808080]" />
        <div className="h-[137px]" />
        <div className="-mx-[2px] h-[277px] bg-black px-[2px]">
          <div className="h-full w-[46px] bg-[#ebebeb]">
            <div className="size-full rounded-[9px] border-2 border-black bg-white" />
          </div>
        </div>
        <div className="-mt-px h-[52px] border-t-2 border-black bg-[#808080]" />
      </div>
    </div>
  );
}

function ChatWindow() {
  return (
    <section className="absolute left-[485px] top-[120px] flex h-[615px] w-[931px] flex-col border-2 border-black bg-[#ebebeb] p-2">
      <ReplyList />
      <div className="absolute left-[699px] -top-[83px] h-1 w-[58px] bg-black" />
      <div className="flex h-[179px] justify-end">
        <button className="flex size-24 items-center justify-center border-2 border-black">
          <svg width="40" height="40" viewBox="0 0 40 40" fill="none" stroke="#000" strokeWidth="4" strokeLinecap="round" strokeLinejoin="miter">
            <path d="M3 3L37 37M2 13.500V2H13.500M38 26.500V38H26.500" />
          </svg>
        </button>
      </div>
      <div className="flex h-[250px] justify-end border-2 border-black p-1.5">
        <div className="flex w-full border-y-2 border-black bg-white">
          <div className="flex-1" />
          <div className="flex w-[52px] flex-col border-y-2 border-r-4 border-l-2 border-black bg-[#ebebeb]">
            <div className="h-[52px] border-b-2 border-black bg-[#808080]" />
            <div className="flex-1" />
            <div className="h-[9px] border-2 border-black bg-white" />
            <div className="h-[50px] bg-[#808080]" />
          </div>
        </div>
      </div>
      <div className="mt-1.5 flex gap-1.5">
        <div className="flex w-[777px] flex-col">
          <div className="mb-1.5 flex h-11 items-center border-b-2 border-black">
            <span className="w-[763px] shrink-0 pr-1 pb-px text-center text-[34px] leading-[42px] font-bold tracking-[0.2px] whitespace-nowrap [-webkit-text-stroke:0.9px_#000]">[ БЫСТРЫЕ ОТВЕТЫ ]</span>
            <svg width="12" height="8" viewBox="0 0 12 8" fill="none" stroke="#222" strokeWidth="1.1"><path d="M1 1L6 6L11 1" /></svg>
          </div>
          <div className="h-[110px] border-2 border-black bg-white" />
        </div>
        <button className="flex h-40 w-32 items-center justify-center border-2 border-black">
          <svg width="40" height="40" viewBox="0 0 40 40"><path d={PLANE} /></svg>
        </button>
      </div>
    </section>
  );
}

/* ---------- Taskbar ---------- */

function Taskbar() {
  return (
    <footer className="flex h-[50px] items-start border-b-2 border-l border-[#9a9a9a] bg-[#4c7292] text-[#e6eff6]">
      <div className="flex h-12 w-[143px] items-center">
        <svg width="143" height="48" viewBox="3 118 429 144" fill="none" stroke="#fff">
          <path d="M72 148L81 179L112 180L87 199L97 231L72 212L47 231L57 199L32 180L63 179Z" strokeWidth="3" />
          <path d="M72 164L78 185H94L82 195L86 210L72 200L58 210L62 195L50 185H66Z" fill="#dfe6ec" stroke="none" />
          <rect x="167" y="149" width="75" height="53" rx="3" strokeWidth="5" />
          <rect x="184" y="176" width="75" height="53" rx="3" strokeWidth="5" fill="#4c7292" />
          <path d="M211 159H236M229 186H254" strokeWidth="5" strokeDasharray="6 3" />
          <path d="M308 229V151H333V162H400V229Z" strokeWidth="5" strokeLinejoin="round" />
          <path d="M308 162H335" strokeWidth="4" />
          <path d="M333 195Q354 176 375 195Q354 214 333 195Z" strokeWidth="4" />
          <circle cx="354" cy="195" r="6" strokeWidth="4" />
          <path d="M338 183L334 178M346 179L343 173M354 178V172M362 179L365 173M370 183L374 178" strokeWidth="3" />
        </svg>
      </div>
      <div className="mt-[5px] h-[38px] w-px bg-[#8dabc2]" />
      <div className="ml-[14px] flex h-12 w-[168px] items-center">
        <svg width="32" height="22" viewBox="478 154 95 68" fill={INK}>
          <path d="M505 156L516 163H532L543 156L541 170Q540 180 524 180T508 170Z" />
          <path d="M508 166Q496 164 478 196L490 194L492 210L506 206L516 218L524 221L534 216L544 206L558 210L560 194L573 196Q556 164 542 168L524 184Z" />
          <path d="M508 172Q524 192 541 172" fill="none" stroke="#4c7292" strokeWidth="3" />
          <path d="M512 178Q524 186 537 178M515 172Q524 165 533 172M525 188V208M519 190H531" fill="none" stroke="#7f97aa" strokeWidth="2.500" />
        </svg>
        <span className="ml-0.5 text-[13px] leading-4 tracking-[-0.6px]">МУР</span>
      </div>
      <div className="flex h-12 w-[170px] items-center bg-[#8dabc2] pl-[7px] text-black">
        <svg width="27" height="28" viewBox="0 0 27 28" fill="none" stroke="#000" strokeWidth="2.200">
          <path d="M5 1.500H24Q26 1.500 26 3.500V17" />
          <path d="M1.200 26V8.500Q1.200 6.500 3 6.500H19.500Q21.500 6.500 21.500 8.500V20Q21.500 21.800 19.500 21.800H5.500Z" />
        </svg>
        <span className="ml-1 pt-0.5 text-[13px] leading-4 font-bold tracking-[-0.15px] whitespace-nowrap">Военный чат</span>
      </div>
      <div className="flex-1" />
      <svg width="110" height="48" viewBox="0 0 110 48" fill="none" stroke="#fff" strokeWidth="1.800">
        <path d="M1.500 19H6L15.500 11V36L6 29H1.500ZM19 19Q24 24 19 29" />
        <path d="M38 10H59V19M38 10V25H47M40 27V32H46M44 29L46.500 32L44 34" />
        <rect x="49" y="22" width="20" height="14" rx="1" />
        <path d="M59 36V39M54 39H65M55.500 28L58.500 31.500L63 26" />
        <path d="M81 12H102Q106 12 106 14V34Q106 35 104 35H102L101 37L98 35H82Q80 35 80 33V14Q80 12 81 12ZM84 17.500H102M84 22.500H102M84 27.500H102" />
        <circle cx="104.500" cy="13" r="5" fill="#f04848" stroke="none" />
      </svg>
      <div className="ml-1.5 mt-2 flex h-8 w-8 items-center justify-center rounded-[3px] border border-[#8dabc2] pb-1 text-[17px] leading-none tracking-[0.2px]">en</div>
      <div className="ml-[9px] mt-[5px] h-[38px] w-px bg-[#8dabc2]" />
      <div className="w-[84px] pt-1.5 text-center whitespace-nowrap">
        <div className="text-[19px] leading-[22px] tracking-[-0.3px]">11:24</div>
        <div className="text-[12px] leading-[14px]">СР, 13 МАР</div>
      </div>
      <div className="mr-px h-12 w-1 bg-[#8dabc2]" />
    </footer>
  );
}

export default function App() {
  return (
    <div className="flex h-[989px] w-[1920px] flex-col overflow-hidden bg-white font-['Noto_Sans',sans-serif] text-black">
      <main className="relative h-[939px]">
        <MapCanvas />
        <div className="relative flex h-[919px]">
          <UnitBar />
          <div className="flex flex-1 flex-col items-end pr-[51px]">
            <TopBar />
            <DataPanel />
            <BottomBar />
          </div>
        </div>
        <ChatWindow />
        <div className="pointer-events-none absolute inset-x-0 -top-2 bottom-[1px] rounded-b-md border-2 border-[#a8a8a8]" />
        <div className="absolute left-[3px] -top-px h-[918px] w-[1894px] border-r border-b border-black/10" />
        <div className="absolute left-[68px] top-[923px] h-2 w-[189px] rounded-full border border-[#919191] bg-[#bababa]" />
        <div className="absolute left-[1903px] top-[839px] h-[58px] w-2 rounded-full border border-[#919191] bg-[#bababa]" />
      </main>
      <Taskbar />
    </div>
  );
}
